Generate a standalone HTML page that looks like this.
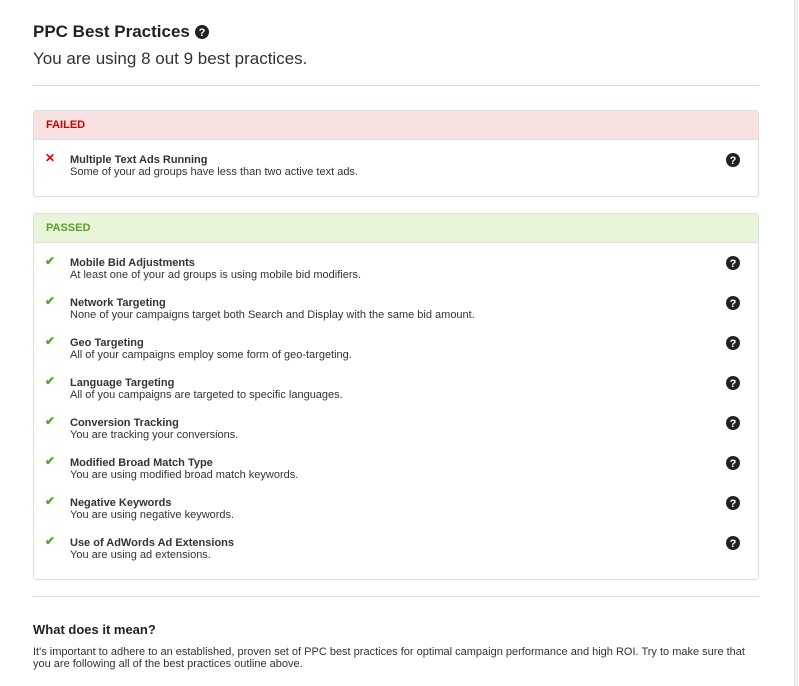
<!DOCTYPE html>
<html><head><style>
body{margin:0;background:#fff;font-family:"Liberation Sans",Arial,sans-serif;color:#333;width:799px;height:686px;overflow:hidden;position:relative}
.sb{position:absolute;right:0;top:0;width:4px;height:686px;background:#eef3f1;border-left:1px solid #e3e8e6}
h1{margin:0;font-size:17px;font-weight:bold;position:absolute;top:22px;left:33px;display:flex;align-items:center;color:#222}
.sub{position:absolute;top:49px;left:33px;font-size:17px;color:#333}
.hr{position:absolute;left:33px;width:726px;height:1px;background:#ddd}
.panel{position:absolute;left:33px;width:724px;border:1px solid #ddd;border-radius:3px}
.ph{height:28px;line-height:29px;padding-left:12px;font-size:11px;font-weight:bold;border-bottom:1px solid #ddd}
.row{position:absolute;left:0;width:100%;height:30px}
.ic{position:absolute;left:11px;top:-2px;font-size:12px;font-weight:bold}
.t{position:absolute;left:36px;top:1px;font-size:11px;font-weight:bold;color:#333}
.d{position:absolute;left:36px;top:13px;font-size:11px;color:#333}
.q{position:absolute;left:692px;top:0px}
.ok{color:#5aa02c}
</style></head><body>
<div class="sb"></div>
<h1>PPC Best Practices&nbsp;<svg width="14" height="14" viewBox="0 0 14 14"><circle cx="7" cy="7" r="7" fill="#222"/><text x="7" y="11" font-size="11" font-weight="bold" fill="#fff" text-anchor="middle" font-family="Liberation Sans">?</text></svg></h1>
<div class="sub">You are using 8 out 9 best practices.</div>
<div class="hr" style="top:85px"></div>

<div class="panel" style="top:110px;height:85px">
<div class="ph" style="background:#f7e1e1;color:#c00">FAILED</div>
<div class="row" style="top:42px"><span class="ic" style="color:#d00">✕</span><div class="t">Multiple Text Ads Running</div><div class="d">Some of your ad groups have less than two active text ads.</div>
<svg class="q" width="14" height="14" viewBox="0 0 14 14"><circle cx="7" cy="7" r="7" fill="#222"/><text x="7" y="11" font-size="11" font-weight="bold" fill="#fff" text-anchor="middle" font-family="Liberation Sans">?</text></svg></div>
</div>

<div class="panel" style="top:213px;height:365px">
<div class="ph" style="background:#e8f5d9;color:#5aa02c">PASSED</div>
<div class="row" style="top:42px"><span class="ic ok">✔</span><div class="t">Mobile Bid Adjustments</div><div class="d">At least one of your ad groups is using mobile bid modifiers.</div><svg class="q" width="14" height="14" viewBox="0 0 14 14"><circle cx="7" cy="7" r="7" fill="#222"/><text x="7" y="11" font-size="11" font-weight="bold" fill="#fff" text-anchor="middle" font-family="Liberation Sans">?</text></svg></div>
<div class="row" style="top:82px"><span class="ic ok">✔</span><div class="t">Network Targeting</div><div class="d">None of your campaigns target both Search and Display with the same bid amount.</div><svg class="q" width="14" height="14" viewBox="0 0 14 14"><circle cx="7" cy="7" r="7" fill="#222"/><text x="7" y="11" font-size="11" font-weight="bold" fill="#fff" text-anchor="middle" font-family="Liberation Sans">?</text></svg></div>
<div class="row" style="top:122px"><span class="ic ok">✔</span><div class="t">Geo Targeting</div><div class="d">All of your campaigns employ some form of geo-targeting.</div><svg class="q" width="14" height="14" viewBox="0 0 14 14"><circle cx="7" cy="7" r="7" fill="#222"/><text x="7" y="11" font-size="11" font-weight="bold" fill="#fff" text-anchor="middle" font-family="Liberation Sans">?</text></svg></div>
<div class="row" style="top:162px"><span class="ic ok">✔</span><div class="t">Language Targeting</div><div class="d">All of you campaigns are targeted to specific languages.</div><svg class="q" width="14" height="14" viewBox="0 0 14 14"><circle cx="7" cy="7" r="7" fill="#222"/><text x="7" y="11" font-size="11" font-weight="bold" fill="#fff" text-anchor="middle" font-family="Liberation Sans">?</text></svg></div>
<div class="row" style="top:202px"><span class="ic ok">✔</span><div class="t">Conversion Tracking</div><div class="d">You are tracking your conversions.</div><svg class="q" width="14" height="14" viewBox="0 0 14 14"><circle cx="7" cy="7" r="7" fill="#222"/><text x="7" y="11" font-size="11" font-weight="bold" fill="#fff" text-anchor="middle" font-family="Liberation Sans">?</text></svg></div>
<div class="row" style="top:242px"><span class="ic ok">✔</span><div class="t">Modified Broad Match Type</div><div class="d">You are using modified broad match keywords.</div><svg class="q" width="14" height="14" viewBox="0 0 14 14"><circle cx="7" cy="7" r="7" fill="#222"/><text x="7" y="11" font-size="11" font-weight="bold" fill="#fff" text-anchor="middle" font-family="Liberation Sans">?</text></svg></div>
<div class="row" style="top:282px"><span class="ic ok">✔</span><div class="t">Negative Keywords</div><div class="d">You are using negative keywords.</div><svg class="q" width="14" height="14" viewBox="0 0 14 14"><circle cx="7" cy="7" r="7" fill="#222"/><text x="7" y="11" font-size="11" font-weight="bold" fill="#fff" text-anchor="middle" font-family="Liberation Sans">?</text></svg></div>
<div class="row" style="top:322px"><span class="ic ok">✔</span><div class="t">Use of AdWords Ad Extensions</div><div class="d">You are using ad extensions.</div><svg class="q" width="14" height="14" viewBox="0 0 14 14"><circle cx="7" cy="7" r="7" fill="#222"/><text x="7" y="11" font-size="11" font-weight="bold" fill="#fff" text-anchor="middle" font-family="Liberation Sans">?</text></svg></div>
</div>

<div class="hr" style="top:596px"></div>
<div style="position:absolute;left:33px;top:622px;font-size:13px;font-weight:bold;color:#222">What does it mean?</div>
<div style="position:absolute;left:33px;top:646px;width:726px;font-size:11px;line-height:12px;color:#333">It's important to adhere to an established, proven set of PPC best practices for optimal campaign performance and high ROI. Try to make sure that you are following all of the best practices outline above.</div>
</body></html>
